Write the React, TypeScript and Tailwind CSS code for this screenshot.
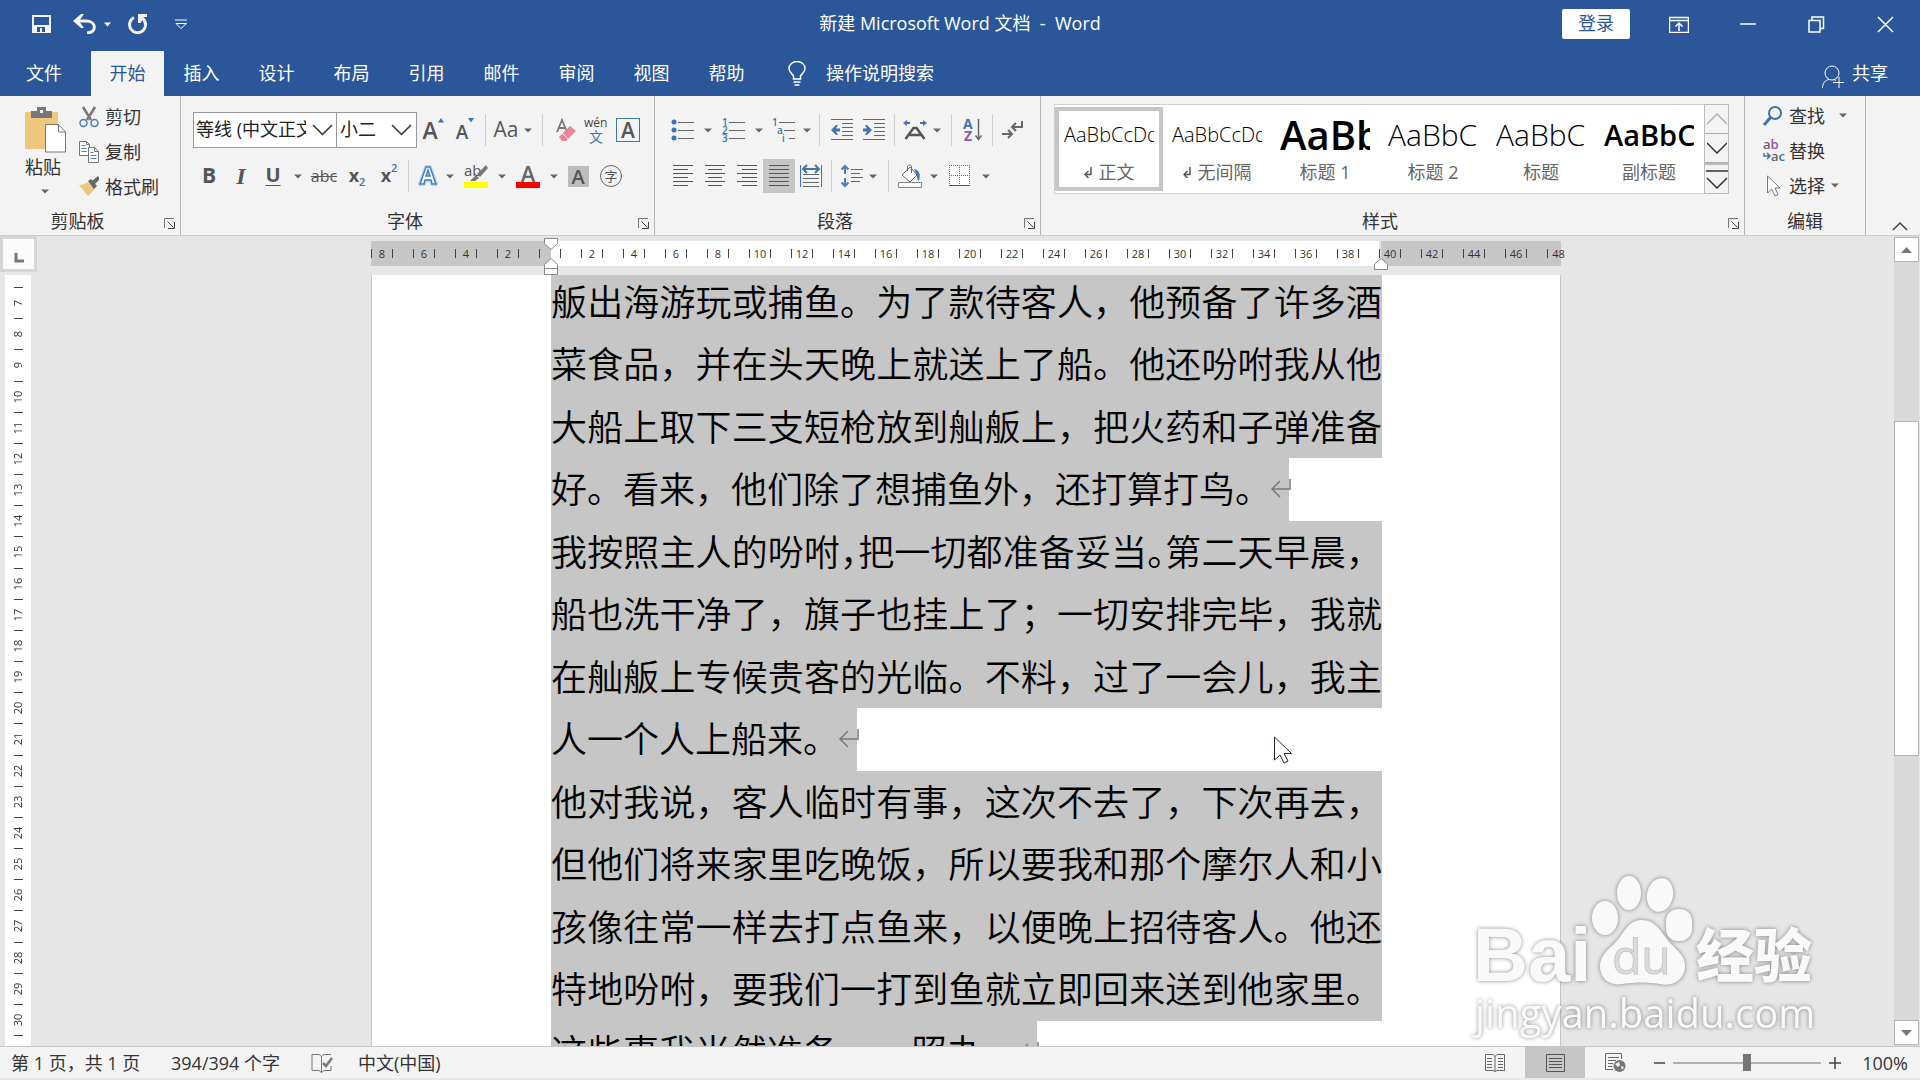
import type { ReactNode } from "react";

const tabs = ["插入", "设计", "布局", "引用", "邮件", "审阅", "视图", "帮助"];

const styleCards = [
  { name: "正文", sample: "AaBbCcDd", look: "text-[20px] font-light", mark: true },
  { name: "无间隔", sample: "AaBbCcDd", look: "text-[20px] font-light", mark: true },
  { name: "标题 1", sample: "AaBb", look: "text-[40px] font-semibold" },
  { name: "标题 2", sample: "AaBbC", look: "text-[30px] font-light" },
  { name: "标题", sample: "AaBbC", look: "text-[30px] font-light" },
  { name: "副标题", sample: "AaBbC", look: "text-[29px] font-semibold" },
];

const lines = [
  { text: "舨出海游玩或捕鱼。为了款待客人，他预备了许多酒" },
  { text: "菜食品，并在头天晚上就送上了船。他还吩咐我从他" },
  { text: "大船上取下三支短枪放到舢舨上，把火药和子弹准备" },
  { text: "好。看来，他们除了想捕鱼外，还打算打鸟。", end: true },
  { text: "我按照主人的吩咐,把一切都准备妥当.第二天早晨，", tight: true },
  { text: "船也洗干净了，旗子也挂上了；一切安排完毕，我就" },
  { text: "在舢舨上专候贵客的光临。不料，过了一会儿，我主" },
  { text: "人一个人上船来。", end: true },
  { text: "他对我说，客人临时有事，这次不去了，下次再去，" },
  { text: "但他们将来家里吃晚饭，所以要我和那个摩尔人和小" },
  { text: "孩像往常一样去打点鱼来，以便晚上招待客人。他还" },
  { text: "特地吩咐，要我们一打到鱼就立即回来送到他家里。" },
  { text: "这些事我当然准备一一照办。", end: true },
];

const hMarks = Array.from({ length: 29 }, (_, i) => i * 2 - 8);
const vMarks = Array.from({ length: 24 }, (_, i) => i + 7);

function Svg({ w = 24, h = 24, children }: { w?: number; h?: number; children: ReactNode }) {
  return (
    <svg width={w} height={h} viewBox={`0 0 ${w} ${h}`} fill="none" className="shrink-0" aria-hidden="true">
      {children}
    </svg>
  );
}

function Tool({ label, className = "w-8", children }: { label: string; className?: string; children: ReactNode }) {
  return (
    <button aria-label={label} className={`flex h-full shrink-0 items-center justify-center ${className}`}>
      {children}
    </button>
  );
}

function Caret({ className = "w-3" }: { className?: string }) {
  return (
    <button aria-label="更多" className={`flex h-full shrink-0 items-center justify-center ${className}`}>
      <Svg w={8} h={5}>
        <path d="M0 0.5h8L4 4.5z" fill="#666" />
      </Svg>
    </button>
  );
}

function Sep({ className }: { className: string }) {
  return (
    <div className={`flex h-8 shrink-0 justify-center ${className}`}>
      <div className="w-px bg-[#cfcfcf]" />
    </div>
  );
}

function Group({ title, className, launcher, children }: { title: string; className: string; launcher?: boolean; children: ReactNode }) {
  return (
    <section className={`relative flex flex-col border-r border-[#b5b5b5] ${className}`}>
      {children}
      <div className="mt-auto flex h-6 items-center pb-1">
        <h2 className={`flex-1 text-center text-[18px] leading-6 ${launcher ? "pr-2" : ""}`}>{title}</h2>
        {launcher && (
          <button aria-label={title + "设置"} className="mr-1 mt-1">
            <Svg w={13} h={13}>
              <path d="M1.5 11V1.5H11" stroke="#777" />
              <path d="M4.5 4.5l6 6M11.5 5v6.5H5" stroke="#444" />
            </Svg>
          </button>
        )}
      </div>
    </section>
  );
}

function Lines({ rows }: { rows: number[][] }) {
  return (
    <Svg w={20} h={22}>
      {rows.map(([x, w], i) => (
        <rect key={i} x={x} y={i * 4} width={w} height={1} fill="#555" />
      ))}
    </Svg>
  );
}

function TitleBar() {
  return (
    <header className="flex h-[51px] shrink-0 items-start text-white">
      <div className="flex h-12 flex-1 items-center">
        <button aria-label="保存" className="ml-8">
          <Svg w={20} h={20}>
            <path d="M0 1h19v18H0zM2 3v8h15V3zM5 13v5h3v-4h2v4h3v-5z" fill="#f3f3f3" fillRule="evenodd" />
          </Svg>
        </button>
        <button aria-label="撤销" className="ml-[21px]">
          <Svg w={24} h={20}>
            <path d="M3 7h10c11 0 11 12 1 12" stroke="#f3f3f3" strokeWidth="3" />
            <path d="M0 7l8-7h3L6 7l5 7H8z" fill="#f3f3f3" />
          </Svg>
        </button>
        <button aria-label="撤销列表" className="ml-[7px]">
          <Svg w={8} h={5}><path d="M0 .5h7L3.5 4.500z" fill="#fff" /></Svg>
        </button>
        <button aria-label="重复" className="ml-4">
          <Svg w={20} h={20}>
            <path d="M6 3.500a8 8 0 1 0 8 .5" stroke="#f3f3f3" strokeWidth="3" />
            <path d="M10 0h9v3h-4l-2 6h-3z" fill="#f3f3f3" />
          </Svg>
        </button>
        <button aria-label="自定义快速访问工具栏" className="ml-[27px]">
          <Svg w={13} h={11}><path d="M0 1h12M1 4.500h10.500L6 9.500z" stroke="#fff" /></Svg>
        </button>
      </div>
      <h1 className="flex h-[46px] items-center text-[18px] whitespace-pre">新建 Microsoft Word 文档  -  Word</h1>
      <div className="flex h-12 flex-1 items-center justify-end">
        <button className="mr-[14px] flex h-[30px] w-[68px] items-center justify-center rounded-[2px] bg-white pb-[2px] text-[18px] text-[#2b579a]">登录</button>
        <button aria-label="功能区显示选项" className="flex w-[69px] justify-center">
          <Svg w={20} h={17}>
            <path d="M.5 1.500h19v15H.5zM0 4.500h20M10 15V7M6.500 10.500L10 7l3.500 3.500" stroke="#fff" strokeWidth="1.500" />
          </Svg>
        </button>
        <button aria-label="最小化" className="flex w-[69px] justify-center">
          <Svg w={16} h={2}><path d="M0 1h16" stroke="#fff" strokeWidth="1.500" /></Svg>
        </button>
        <button aria-label="向下还原" className="flex w-[69px] justify-center">
          <Svg w={17} h={17}><path d="M1 4.500h11v11.500H1zM4 4V1h11.500v11.500H12" stroke="#fff" strokeWidth="1.500" /></Svg>
        </button>
        <button aria-label="关闭" className="flex w-[69px] justify-center">
          <Svg w={17} h={17}><path d="M1 1l15 15M16 1L1 16" stroke="#fff" strokeWidth="1.500" /></Svg>
        </button>
      </div>
    </header>
  );
}

function TabBar() {
  return (
    <nav className="flex h-[45px] shrink-0 items-stretch text-[18px] text-white">
      <button className="w-[91px] pr-[3px] pb-[2px]">文件</button>
      <button className="w-[73px] bg-[#f3f3f3] pb-[2px] text-[#2b579a]">开始</button>
      {tabs.map((tab) => (
        <button key={tab} className="w-[75px] pb-[2px]">{tab}</button>
      ))}
      <button className="ml-6 flex items-center">
        <Svg w={18} h={26}>
          <path d="M5.500 18v-3C4 12.500 1 11 1 7.500a8 7 0 0 1 16 0c0 3.500-3 5-4.500 7.500v3zM5.500 21h7M6.500 24h5" stroke="#fff" strokeWidth="1.500" />
        </Svg>
        <span className="ml-5 pb-[2px]">操作说明搜索</span>
      </button>
      <button className="mr-8 ml-auto flex items-center pb-[2px]">
        <span className="mt-2 mr-[7px]">
          <Svg w={23} h={24}>
            <circle cx="10" cy="8" r="7" stroke="#fff" />
            <path d="M.5 23c0-5 3-8 6.500-8.500M12 14.500l2 1M17 12v11M11 17.500h11" stroke="#fff" />
          </Svg>
        </span>
        共享
      </button>
    </nav>
  );
}

function Clipboard() {
  return (
    <Group title="剪贴板" className="w-[181px]" launcher>
      <div className="flex pt-[3px]">
        <button className="flex w-[75px] flex-col items-center pt-2 pl-[17px]">
          <Svg w={42} h={46}>
            <path d="M0 5h33v37H0z" fill="#eec77e" />
            <path d="M6 4h6V0h9v4h6v7H6z" fill="#777" />
            <rect x="15" y="3" width="3" height="3" fill="#f3f3f3" />
            <path d="M20.500 17.500h13l7 7.500v20h-20z" fill="#fff" stroke="#777" />
            <path d="M33.500 17.500V25h7" stroke="#777" />
          </Svg>
          <span className="pr-[6px] text-[18px] leading-7">粘贴</span>
          <span className="mt-[8px] pr-[3px]"><Svg w={8} h={5}><path d="M0 .5h8L4 4.500z" fill="#666" /></Svg></span>
        </button>
        <div className="flex flex-col text-[18px]">
          <button className="flex h-[35px] items-center gap-[6px] pl-1">
            <Svg w={20} h={22}>
              <path d="M4 1l8 13M16 1L8 14" stroke="#777" strokeWidth="2.500" />
              <circle cx="4.500" cy="17" r="3.500" stroke="#4a7ebb" strokeWidth="1.500" />
              <circle cx="15.500" cy="17" r="3.500" stroke="#4a7ebb" strokeWidth="1.500" />
            </Svg>
            剪切
          </button>
          <button className="flex h-[35px] items-center gap-[6px] pl-1">
            <Svg w={20} h={22}>
              <path d="M.5.500h7l3 3v11h-10zM7.500.500v3h3" fill="#fff" stroke="#777" />
              <path d="M2.500 4.500h4M2.500 7.500h5M2.500 10.500h5" stroke="#4a7ebb" />
              <path d="M9.500 6.500h6l4 4v11h-10zM15.500 6.500v4h4" fill="#fff" stroke="#777" />
              <path d="M11.500 11.500h3M11.500 14.500h6M11.500 17.500h6" stroke="#4a7ebb" />
            </Svg>
            复制
          </button>
          <button className="flex h-[35px] items-center gap-[6px] pl-1">
            <Svg w={20} h={21}>
              <path d="M0 9c4 0 6-1 9-3l7 7-7 7z" fill="#eec77e" />
              <path d="M9 5l3-2 6 7-3 3zM13 5l6-5 2 3-5 5z" fill="#666" />
            </Svg>
            格式刷
          </button>
        </div>
      </div>
    </Group>
  );
}

function FontGroup() {
  return (
    <Group title="字体" className="w-[474px]" launcher>
      <div className="mt-4 flex h-9 items-center pl-3 text-[#555]">
        <div className="flex h-full w-36 items-center border border-[#999] bg-white">
          <input aria-label="字体" defaultValue="等线 (中文正文)" className="ml-[2px] w-[110px] bg-transparent pb-[2px] text-[18px] text-[#222] outline-none" />
          <button aria-label="选择字体" className="ml-[6px]"><Svg w={21} h={12}><path d="M1 1l9.500 9.500L20 1" stroke="#333" strokeWidth="1.500" /></Svg></button>
        </div>
        <div className="flex h-full w-20 items-center border border-l-0 border-[#999] bg-white">
          <input aria-label="字号" defaultValue="小二" className="ml-[3px] w-[51px] bg-transparent pb-[2px] text-[18px] text-[#222] outline-none" />
          <button aria-label="选择字号"><Svg w={21} h={12}><path d="M1 1l9.500 9.500L20 1" stroke="#333" strokeWidth="1.500" /></Svg></button>
        </div>
        <Tool label="增大字号">
          <span className="text-[23px] leading-6 font-semibold">A</span>
          <span className="-mt-5"><Svg w={6} h={5}><path d="M0 4.500h6L3 0z" fill="#3f74ad" /></Svg></span>
        </Tool>
        <Tool label="减小字号">
          <span className="mt-1 text-[19px] leading-6 font-semibold">A</span>
          <span className="-mt-5"><Svg w={6} h={5}><path d="M0 0h6L3 4.500z" fill="#3f74ad" /></Svg></span>
        </Tool>
        <Sep className="w-[9px]" />
        <Tool label="更改大小写"><span className="pb-[2px] text-[21px]">Aa</span></Tool>
        <Caret />
        <Sep className="w-[17px]" />
        <Tool label="清除所有格式" className="w-[30px]">
          <Svg w={22} h={24}>
            <path d="M2 14L7 2l5 12M4 10h6" stroke="#777" strokeWidth="1.800" />
            <path d="M4 19l11-11 6 5-10 10H7z" fill="#e8859a" />
            <path d="M7 15l6 6" stroke="#f3f3f3" />
          </Svg>
        </Tool>
        <Tool label="拼音指南" className="w-[30px]">
          <Svg w={24} h={28}>
            <text x="0" y="11" fontSize="12" fill="#444">wén</text>
            <text x="5" y="26" fontSize="14" fill="#3f74ad">文</text>
          </Svg>
        </Tool>
        <Tool label="字符边框" className="w-[34px]">
          <span className="flex size-6 items-center justify-center border border-[#3f74ad] text-[21px] leading-[22px] font-semibold">A</span>
        </Tool>
      </div>
      <div className="mt-[11px] flex h-[34px] items-center pl-3 text-[#555]">
        <Tool label="加粗"><b className="pb-[2px] text-[21px]">B</b></Tool>
        <Tool label="倾斜"><i className="font-['Liberation_Serif',serif] text-[24px] font-bold">I</i></Tool>
        <Tool label="下划线"><span className="pb-[2px] text-[20px] font-bold underline underline-offset-3 decoration-1">U</span></Tool>
        <Caret className="w-[18px]" />
        <Tool label="删除线" className="w-[34px]"><s className="text-[16px]">abc</s></Tool>
        <Tool label="下标"><b className="pb-[2px] text-[18px]">x</b><span className="mt-3 text-[11px] font-semibold text-[#3f74ad]">2</span></Tool>
        <Tool label="上标"><b className="pb-[2px] text-[18px]">x</b><span className="mb-4 text-[11px] font-semibold text-[#3f74ad]">2</span></Tool>
        <Sep className="w-[7px]" />
        <Tool label="文本效果">
          <Svg w={22} h={24}>
            <path d="M3 20L9 3h4l6 17h-4l-1-4H8l-1 4zM9 12h4l-2-6z" fill="#fff" stroke="#bcd5f0" strokeWidth="4" strokeLinejoin="round" />
            <path d="M3 20L9 3h4l6 17h-4l-1-4H8l-1 4zM9 12h4l-2-6z" fill="#fff" stroke="#3f7fc4" strokeWidth="1.500" />
          </Svg>
        </Tool>
        <Caret />
        <Tool label="突出显示" className="w-10 flex-col">
          <span className="relative flex h-[18px] w-6 text-[15px] leading-[12px]">
            ab
            <span className="absolute top-0 left-1"><Svg w={20} h={18}><path d="M18 1l2 3-8 9-3-3zM8 11l3 3-4 3H2z" fill="#777" /></Svg></span>
          </span>
          <span className="h-[6px] w-6 bg-[#ffff00]" />
        </Tool>
        <Caret />
        <Tool label="字体颜色" className="w-10 flex-col">
          <span className="text-[22px] leading-[18px] font-semibold text-[#666]">A</span>
          <span className="h-[6px] w-6 bg-[#ff0000]" />
        </Tool>
        <Caret />
        <Tool label="字符底纹" className="w-9">
          <span className="flex size-[21px] items-center justify-center bg-[#bdbdbd] text-[20px] leading-[21px] font-semibold">A</span>
        </Tool>
        <Tool label="带圈字符" className="w-[30px]">
          <span className="flex size-[22px] items-center justify-center rounded-full border border-[#666] text-[13px] leading-5">字</span>
        </Tool>
      </div>
    </Group>
  );
}

function ListIcon({ labels }: { labels: string[] }) {
  const step = labels[1] === "a" ? 5 : 0;
  return (
    <Svg w={24} h={24}>
      {labels.map((label, i) => (
        <g key={label + i}>
          {label ? (
            <text x={i * step} y={8 + i * 8} fontSize="10" fontWeight="600" fill="#3f74ad">{label}</text>
          ) : (
            <circle cx="3" cy={4 + i * 8} r="2.500" fill="#3f74ad" />
          )}
          <path d={`M${7 + i * step} ${4.500 + i * 8}H23`} stroke="#666" />
        </g>
      ))}
    </Svg>
  );
}

function Paragraph() {
  return (
    <Group title="段落" className="w-[386px]" launcher>
      <div className="mt-4 flex h-9 items-center pl-3">
        <Tool label="项目符号"><ListIcon labels={["", "", ""]} /></Tool>
        <Caret className="w-[18px]" />
        <Tool label="编号" className="w-[34px]"><ListIcon labels={["1", "2", "3"]} /></Tool>
        <Caret className="w-4" />
        <Tool label="多级列表" className="w-[34px]"><ListIcon labels={["1", "a", "i"]} /></Tool>
        <Caret />
        <Sep className="w-[13px]" />
        <Tool label="减少缩进量">
          <Svg w={22} h={22}>
            <path d="M0 .5h22M11 4.500h11M11 8.500h11M11 12.500h11M11 16.500h11M0 20.500h22" stroke="#666" />
            <path d="M0 11l5-5h2L5 9.500h4v3H5L7 16H5z" fill="#3f74ad" />
          </Svg>
        </Tool>
        <Tool label="增加缩进量">
          <Svg w={22} h={22}>
            <path d="M0 .5h22M11 4.500h11M11 8.500h11M11 12.500h11M11 16.500h11M0 20.500h22" stroke="#666" />
            <path d="M9 11L4 6H2l2 3.500H0v3h4L2 16h2z" fill="#3f74ad" />
          </Svg>
        </Tool>
        <Sep className="w-[9px]" />
        <Tool label="中文版式">
          <Svg w={24} h={22}>
            <path d="M0 4l4-3v2h3v2H4v2zM24 4l-4-3v2h-3v2h3v2z" fill="#3f74ad" />
            <path d="M2.500 20L10.500 9h3l8 11M6 16h12" stroke="#555" strokeWidth="2.500" />
          </Svg>
        </Tool>
        <Caret />
        <Sep className="w-4" />
        <Tool label="排序" className="w-7">
          <Svg w={20} h={24}>
            <text x="0" y="11" fontSize="14" fontWeight="700" fill="#3f74ad">A</text>
            <text x="1" y="23" fontSize="14" fontWeight="700" fill="#8e54b0">Z</text>
            <path d="M15.500 1v20M12.500 17.500l3 4 3-4" stroke="#666" strokeWidth="1.500" />
          </Svg>
        </Tool>
        <Sep className="w-[10px]" />
        <Tool label="显示编辑标记">
          <Svg w={22} h={20}>
            <path d="M20 1v6h-9M14 3l-4 4 4 4M0 14h10M6 10l4 4-4 4" stroke="#666" strokeWidth="2" />
          </Svg>
        </Tool>
      </div>
      <div className="mt-[11px] flex h-[34px] items-center pl-3">
        <Tool label="左对齐"><Lines rows={[[0, 20], [0, 15], [0, 20], [0, 15], [0, 20], [0, 15]]} /></Tool>
        <Tool label="居中"><Lines rows={[[0, 20], [3, 14], [0, 20], [3, 14], [0, 20], [3, 14]]} /></Tool>
        <Tool label="右对齐"><Lines rows={[[0, 20], [5, 15], [0, 20], [5, 15], [0, 20], [5, 15]]} /></Tool>
        <Tool label="两端对齐" className="w-8 bg-[#c6c6c6]"><Lines rows={[[0, 20], [0, 20], [0, 20], [0, 20], [0, 20], [0, 20]]} /></Tool>
        <Tool label="分散对齐">
          <Svg w={22} h={24}>
            <path d="M.5 1v22M21.500 1v22" stroke="#3f74ad" />
            <path d="M3 5h16M7 1L3 5l4 4M15 1l4 4-4 4" stroke="#3f74ad" strokeWidth="2" />
            <path d="M3 10.500h16M3 14.500h16M3 18.500h16M3 22.500h16" stroke="#666" />
          </Svg>
        </Tool>
        <Sep className="w-[9px]" />
        <Tool label="行和段落间距">
          <Svg w={22} h={24}>
            <path d="M4 2v8M4 14v8M.5 5.500L4 2l3.500 3.500M.5 18.500L4 22l3.500-3.500" stroke="#4a7ebb" strokeWidth="2" />
            <path d="M10 5.500h12M10 9.500h9M10 13.500h12M10 17.500h9" stroke="#666" />
          </Svg>
        </Tool>
        <Caret className="w-[10px]" />
        <Sep className="w-5" />
        <Tool label="底纹" className="w-6">
          <Svg w={24} h={24}>
            <path d="M4 11l8-8 7 8-7 7z" fill="#fff" stroke="#666" />
            <path d="M9.500 7V2.500c0-2 4-2 4 0V9" stroke="#666" />
            <path d="M16 5c5 1 7 5 5 12-2-1-2-4-2-6z" fill="#3f74ad" />
            <path d="M.5 18.500h23v5H.5z" fill="#fff" stroke="#888" />
          </Svg>
        </Tool>
        <Caret className="w-6" />
        <Tool label="边框" className="w-7">
          <Svg w={22} h={22}>
            <path d="M0 0h21v21H0z" fill="#fff" />
            <path d="M0 .5h21M0 10.500h21M.5 0v20M10.500 0v20M20.500 0v20" stroke="#666" strokeDasharray="1 1" />
            <path d="M0 20.500h21" stroke="#555" />
          </Svg>
        </Tool>
        <Caret className="w-6" />
      </div>
    </Group>
  );
}

function Styles() {
  return (
    <Group title="样式" className="min-w-0 flex-1" launcher>
      <div className="mt-2 ml-[13px] flex h-[90px]">
        <div className="flex w-[650px] items-center border border-r-0 border-[#d0d0d0] bg-white">
          {styleCards.map((card, i) => (
            <button
              key={card.name}
              className={`flex h-[84px] w-[108px] shrink-0 flex-col items-center justify-between border-4 pb-[3px] ${i === 0 ? "border-[#c6c6c6]" : "border-transparent"}`}
            >
              <span className={`block h-12 w-[90px] overflow-hidden text-left leading-12 font-['Open_Sans',sans-serif] text-black ${card.look}`}>
                {card.sample}
              </span>
              <span className="flex items-center text-[18px] leading-6 text-[#666]">
                {card.mark && (
                  <span className="mr-[7px]"><Svg w={8} h={11}><path d="M7 0v7.500H2M4.500 4L1 7.500 4.500 11" stroke="#555" strokeWidth="1.500" /></Svg></span>
                )}
                {card.name}
              </span>
            </button>
          ))}
        </div>
        <div className="flex w-[25px] flex-col border border-[#bbb]">
          <button aria-label="上一行" className="flex flex-1 items-center justify-center"><Svg w={20} h={12}><path d="M0 11L10 1l10 10" stroke="#b0b0b0" strokeWidth="1.500" /></Svg></button>
          <button aria-label="下一行" className="flex flex-1 items-center justify-center border-y border-[#aaa]"><Svg w={20} h={12}><path d="M0 1l10 10L20 1" stroke="#333" strokeWidth="1.500" /></Svg></button>
          <button aria-label="其他" className="flex flex-1 items-center justify-center border-t-2 border-[#bbb]"><Svg w={22} h={19}><path d="M0 1h22M1 8l10 10L21 8" stroke="#333" strokeWidth="1.500" /></Svg></button>
        </div>
      </div>
    </Group>
  );
}

function Editing() {
  return (
    <Group title="编辑" className="w-[121px]">
      <div className="flex flex-col pt-[2px] pl-[18px] text-[18px]">
        <button className="flex h-[35px] items-center gap-[6px]">
          <Svg w={20} h={20}><circle cx="12" cy="7" r="6" stroke="#3f74ad" strokeWidth="2" /><path d="M8 11l-7 8" stroke="#3f74ad" strokeWidth="3" /></Svg>
          查找
          <span className="ml-2"><Svg w={8} h={5}><path d="M0 .5h8L4 4.500z" fill="#666" /></Svg></span>
        </button>
        <button className="flex h-[35px] items-center gap-[4px]">
          <Svg w={22} h={24}>
            <text x="0" y="10" fontSize="13" fontWeight="600" fill="#666">a<tspan fill="#8e54b0">b</tspan></text>
            <text x="8" y="22" fontSize="13" fontWeight="600" fill="#666">a<tspan fill="#3f74ad">c</tspan></text>
            <path d="M1 14v3h5M4 14l3 3-3 3" stroke="#3f74ad" strokeWidth="1.500" />
          </Svg>
          替换
        </button>
        <button className="flex h-[35px] items-center">
          <span className="mr-2 ml-1"><Svg w={14} h={22}><path d="M.5 1v17l4-4 3.500 7 3-1.500-3-6.500h5z" fill="#fff" stroke="#777" /></Svg></span>
          选择
          <span className="ml-[6px]"><Svg w={8} h={5}><path d="M0 .5h8L4 4.500z" fill="#666" /></Svg></span>
        </button>
      </div>
    </Group>
  );
}

function Ribbon() {
  return (
    <div className="flex h-[140px] shrink-0 border-b border-[#cdcdcd] bg-[#f3f3f3] text-[#333]">
      <Clipboard />
      <FontGroup />
      <Paragraph />
      <Styles />
      <Editing />
      <button aria-label="折叠功能区" className="flex w-[54px] items-end justify-end pr-3 pb-1">
        <Svg w={16} h={10}><path d="M1 9l7-7 7 7" stroke="#444" strokeWidth="1.500" /></Svg>
      </button>
    </div>
  );
}

function HorizontalRuler() {
  return (
    <div className="relative mt-[5px] h-[25px] w-full">
      <div className="absolute inset-0 flex">
        <div className="w-[180px] bg-[#c6c6c6]" />
        <div className="mr-[2px] flex-1 bg-white" />
        <div className="w-[180px] bg-[#c6c6c6]" />
      </div>
      <div className="relative -ml-[10px] flex h-full">
        {hMarks.map((n) => (
          <div key={n} className="flex w-[42px] shrink-0 items-center justify-between px-[10px] text-[11px] text-[#333]">
            <span className="h-[9px] w-px bg-[#444]" />
            {n !== 0 && Math.abs(n)}
            <span className={n === 48 ? "" : "h-[9px] w-px bg-[#444]"} />
          </div>
        ))}
      </div>
      <div className="absolute -top-[3px] left-[173px]">
        <Svg w={14} h={38}>
          <path d="M.5.500h13v5L7 11.500.500 5.500zM7 20.500l6.500 6v10H.500v-10zM.5 30.500h13" fill="#fff" stroke="#888" />
        </Svg>
      </div>
      <div className="absolute top-[17px] right-[173px]">
        <Svg w={14} h={12}><path d="M7 .5l6.500 5.500v5.500H.500V6z" fill="#fff" stroke="#888" /></Svg>
      </div>
    </div>
  );
}

function Line({ text, end, tight }: { text: string; end?: boolean; tight?: boolean }) {
  if (end) {
    return (
      <p className="flex w-fit bg-[#c6c6c6] whitespace-nowrap">
        {text}
        <span className="mt-[21px] -mr-[2px]">
          <Svg w={20} h={20}><path d="M19 0v10H1M9 2L1 10l8 8" stroke="#777" strokeWidth="1.500" /></Svg>
        </span>
      </p>
    );
  }
  return (
    <p className="w-[831px] bg-[#c6c6c6] text-justify [text-align-last:justify]">
      {tight
        ? text.split(/([,.])/).map((part, i) => (
            <span key={i} className={i % 2 ? "[font-feature-settings:'halt']" : ""}>
              {part === "," ? "，" : part === "." ? "。" : part}
            </span>
          ))
        : text}
    </p>
  );
}

function Workspace() {
  return (
    <main className="relative flex min-h-0 flex-1 bg-[#e6e6e6]">
      <div className="flex w-[38px] shrink-0 flex-col">
        <button aria-label="制表符" className="flex h-9 w-[37px] items-center justify-center border-3 border-[#d6d6d6] bg-[#fbfbfb] pt-2">
          <Svg w={10} h={10}><path d="M2 0v8h8" stroke="#777" strokeWidth="3" /></Svg>
        </button>
        <div className="mt-[3px] ml-[5px] min-h-0 w-[26px] flex-1 overflow-hidden bg-white pt-3">
          <div className="flex h-[749px] flex-col text-[11px] text-[#333]">
            {vMarks.map((n) => (
              <div key={n} className="flex min-h-0 flex-1 flex-col items-center">
                <span className="h-px w-[9px] bg-[#444]" />
                <span className="flex flex-1 rotate-180 items-center justify-center leading-4 [writing-mode:vertical-rl]">{n}</span>
              </div>
            ))}
            <span className="h-px w-[9px] self-center bg-[#444]" />
          </div>
        </div>
      </div>
      <div className="flex min-w-0 flex-1 justify-center">
        <div className="flex w-[1190px] flex-col">
          <HorizontalRuler />
          <article className="mt-[9px] min-h-0 flex-1 overflow-hidden border-x border-[#c6c6c6] bg-white pl-[179px]">
            <div className="-mt-[4px] grid h-[812px] auto-rows-fr font-['Noto_Sans_CJK_SC',sans-serif] text-[36px] leading-[58px] font-[350] text-black">
              {lines.map((line) => (
                <Line key={line.text} {...line} />
              ))}
            </div>
          </article>
        </div>
      </div>
      <div className="mr-px flex w-[25px] shrink-0 flex-col bg-[#d9d9d9] pb-px">
        <button aria-label="向上滚动" className="mt-[1px] flex h-[25px] items-center justify-center border border-[#b5b5b5] bg-white">
          <Svg w={11} h={6}><path d="M0 6h11L5.500 0z" fill="#777" /></Svg>
        </button>
        <div className="mt-[159px] h-[335px] border border-[#b5b5b5] bg-white" />
        <button aria-label="向下滚动" className="mt-auto flex h-[25px] items-center justify-center border border-[#b5b5b5] bg-white">
          <Svg w={11} h={6}><path d="M0 0h11L5.500 6z" fill="#777" /></Svg>
        </button>
      </div>
      <div className="absolute top-[500px] left-[1274px]">
        <Svg w={19} h={28}>
          <path d="M.5 1v23l5.500-5 4 8 4-2-4-7.500h7.500z" fill="#fff" stroke="#223" />
        </Svg>
      </div>
      <Watermark />
    </main>
  );
}

function Watermark() {
  return (
    <svg
      width="360"
      height="180"
      viewBox="0 0 360 180"
      className="pointer-events-none absolute right-[90px] bottom-0 drop-shadow-[0_0_2px_rgba(0,0,0,0.45)]"
      fill="#f9f9f9"
      aria-hidden="true"
    >
      <ellipse cx="135" cy="52" rx="13" ry="17" />
      <ellipse cx="159" cy="27" rx="12" ry="17" />
      <ellipse cx="190" cy="29" rx="13" ry="17" transform="rotate(12 190 29)" />
      <rect x="196" y="43" width="26" height="32" rx="12" />
      <path d="M171 54c-14 0-17 15-28 25-8 7-13 13-13 21 0 14 11 20 22 18 13-2 25-2 38 0 12 3 25-4 25-18 0-10-7-15-14-22-9-10-14-24-30-24z" />
      <text x="3" y="115" fontSize="76" fontWeight="700" fontFamily="Liberation Sans, sans-serif">Bai</text>
      <text x="142" y="108" fontSize="48" fontFamily="Open Sans, sans-serif" fill="#dcdcdc" stroke="#c8c8c8" strokeWidth="1">du</text>
      <text x="226" y="111" fontSize="58" fontWeight="900" fontFamily="Noto Sans CJK SC, sans-serif">经验</text>
      <text x="5" y="162" fontSize="40" fontFamily="Open Sans, sans-serif">jingyan.baidu.com</text>
    </svg>
  );
}

function StatusBar() {
  return (
    <footer className="flex h-[34px] shrink-0 items-stretch border-t border-b-2 border-t-[#c6c6c6] border-b-[#e9e9e9] bg-[#f3f3f3] text-[18px] text-[#333]">
      <div className="flex items-center pl-[11px]">
        <span className="w-[160px]">第 1 页，共 1 页</span>
        <span className="w-[140px]">394/394 个字</span>
        <button aria-label="校对" className="w-[47px]">
          <Svg w={22} h={20}>
            <path d="M10.500 3.500L8 1.500H1v16h7l2.500 2 2.500-2h7V13M10.500 3.500v16M10.500 3.500L13 1.500h7" stroke="#777" />
            <path d="M12 10l3 3 6-8" stroke="#777" strokeWidth="2.500" />
          </Svg>
        </button>
        <span>中文(中国)</span>
      </div>
      <div className="ml-auto flex items-center">
        <button aria-label="阅读视图" className="flex w-[60px] justify-center">
          <Svg w={20} h={18}>
            <path d="M10 2.500L8 .500H.500v16H8l2 1 2-1h7.500V.500H12zM10 2v15" stroke="#666" />
            <path d="M2 4.500h5M2 7.500h5M2 10.500h5M2 13.500h5M13 4.500h5M13 7.500h5M13 10.500h5M13 13.500h5" stroke="#666" />
          </Svg>
        </button>
        <button aria-label="页面视图" className="flex h-full w-[60px] items-center justify-center bg-[#c6c6c6]">
          <Svg w={19} h={18}>
            <path d="M.5.500h18v17H.500zM3 4.500h13M3 7.500h13M3 10.500h13M3 13.500h13" stroke="#555" />
          </Svg>
        </button>
        <button aria-label="Web 版式视图" className="flex w-[60px] justify-center">
          <Svg w={21} h={20}>
            <path d="M8 16.500H.500V.500h16V6M3 4.500h11M3 7.500h8M3 10.500h5M3 13.500h4" stroke="#666" />
            <circle cx="14.500" cy="13" r="6" fill="#777" />
            <path d="M10 11l4-2 1 3-2 2zM16 13l3 1-2 3z" fill="#f3f3f3" />
          </Svg>
        </button>
        <button aria-label="缩小" className="ml-[9px]"><Svg w={11} h={12}><path d="M0 6h11" stroke="#444" strokeWidth="1.500" /></Svg></button>
        <input
          type="range"
          aria-label="显示比例"
          min={0}
          max={100}
          defaultValue={50}
          className="mx-2 h-4 w-[148px] appearance-none bg-transparent bg-[linear-gradient(#b0b0b0,#b0b0b0)] bg-[length:100%_2px] bg-center bg-no-repeat [&::-webkit-slider-thumb]:h-[17px] [&::-webkit-slider-thumb]:w-2 [&::-webkit-slider-thumb]:appearance-none [&::-webkit-slider-thumb]:bg-[#777]"
        />
        <button aria-label="放大"><Svg w={12} h={12}><path d="M0 6h12M6 0v12" stroke="#444" strokeWidth="1.500" /></Svg></button>
        <button className="w-[79px] pr-3 text-right">100%</button>
      </div>
    </footer>
  );
}

export default function App() {
  return (
    <div className="flex h-screen flex-col overflow-hidden bg-[#2b579a] font-['Open_Sans','Noto_Sans_CJK_SC',sans-serif] leading-6">
      <TitleBar />
      <TabBar />
      <Ribbon />
      <Workspace />
      <StatusBar />
    </div>
  );
}
